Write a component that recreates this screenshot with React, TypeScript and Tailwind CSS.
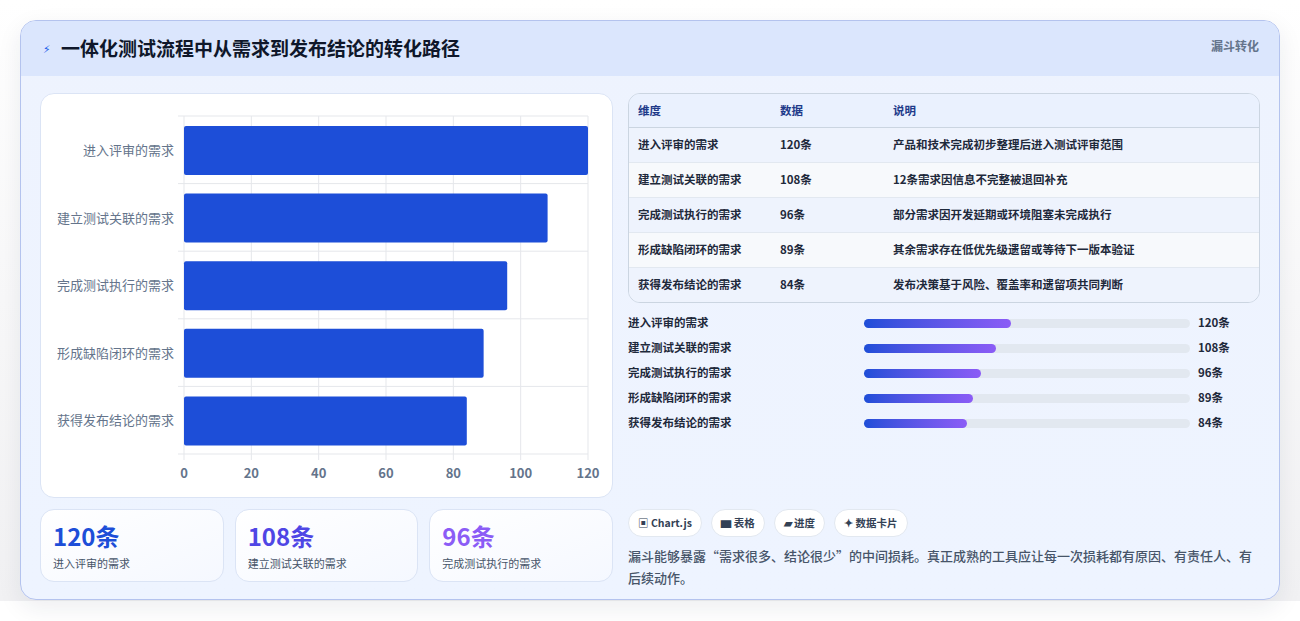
const rows = [
  { name: '进入评审的需求', value: 120, note: '产品和技术完成初步整理后进入测试评审范围' },
  { name: '建立测试关联的需求', value: 108, note: '12条需求因信息不完整被退回补充' },
  { name: '完成测试执行的需求', value: 96, note: '部分需求因开发延期或环境阻塞未完成执行' },
  { name: '形成缺陷闭环的需求', value: 89, note: '其余需求存在低优先级遗留或等待下一版本验证' },
  { name: '获得发布结论的需求', value: 84, note: '发布决策基于风险、覆盖率和遗留项共同判断' },
]

function BarChart() {
  // plot area inside the svg
  const x0 = 143
  const x1 = 547
  const y0 = 22
  const y1 = 360
  const step = (y1 - y0) / 5
  const sx = (v: number) => x0 + ((x1 - x0) * v) / 120
  return (
    <svg width="572" height="403" className="block">
      {[0, 20, 40, 60, 80, 100, 120].map((t) => (
        <g key={t}>
          <line x1={sx(t)} y1={y0} x2={sx(t)} y2={y1 + 6} stroke="#e5e7eb" />
          <text x={sx(t)} y={384} textAnchor="middle" fontSize="13" fontWeight="600" fill="#64748b">
            {t}
          </text>
        </g>
      ))}
      {[0, 1, 2, 3, 4, 5].map((i) => (
        <line key={i} x1={x0 - 6} y1={y0 + i * step} x2={x1} y2={y0 + i * step} stroke="#e5e7eb" />
      ))}
      {rows.map((r, i) => (
        <g key={r.name}>
          <rect x={x0} y={y0 + i * step + 10} width={sx(r.value) - x0} height={49} rx="2" fill="#1d4ed8" />
          <text x={x0 - 10} y={y0 + i * step + 39} textAnchor="end" fontSize="13" fill="#64748b">
            {r.name}
          </text>
        </g>
      ))}
    </svg>
  )
}

export default function App() {
  const font = { fontFamily: '"Noto Sans CJK SC", "Noto Sans", sans-serif' }
  return (
    <div className="w-[1300px] h-[621px] bg-white" style={font}>
      <div className="h-[601px] bg-gradient-to-b from-white to-[#f1f1f3] pt-[20px] px-[20px]">
        <div className="rounded-[16px] border border-[#b4c3ee] bg-gradient-to-b from-[#eef3fe] to-[#eef4ff] shadow-[0_8px_24px_rgba(30,41,59,0.08)] overflow-hidden h-[580px]">
          <div className="h-[55px] bg-[#dbe6fd] flex items-center justify-between pl-[22px] pr-[20px]">
            <div className="flex items-center gap-[10px]">
              <span className="text-[11px] text-[#2563eb]">⚡︎</span>
              <h1 className="text-[19px] font-bold text-[#0f172a]">一体化测试流程中从需求到发布结论的转化路径</h1>
            </div>
            <span className="text-[12px] font-bold text-[#64748b] self-start mt-[16px]">漏斗转化</span>
          </div>
          <div className="flex gap-[15px] px-[19px] pt-[17px]">
            <div className="w-[573px] flex flex-col gap-[11px]">
              <div className="bg-white rounded-[14px] border border-[#dbe4f5] overflow-hidden">
                <BarChart />
              </div>
              <div className="grid grid-cols-3 gap-[11px]">
                {[
                  ['120条', '进入评审的需求', 'text-[#1d4ed8]'],
                  ['108条', '建立测试关联的需求', 'text-[#4f46e5]'],
                  ['96条', '完成测试执行的需求', 'text-[#8b5cf6]'],
                ].map(([n, l, c]) => (
                  <div key={l} className="h-[73px] rounded-[14px] border border-[#dbe4f5] bg-gradient-to-br from-white to-[#f5f8ff] px-[12px] pt-[10px]">
                    <div className={`text-[24px] font-bold leading-[32px] ${c}`}>{n}</div>
                    <div className="text-[11px] text-[#475569] mt-[3px]">{l}</div>
                  </div>
                ))}
              </div>
            </div>
            <div className="w-[634px] flex flex-col">
              <div className="rounded-[12px] border border-[#cbd5e1] overflow-hidden">
                <table className="w-full text-[11.5px] font-semibold text-[#1e293b]">
                  <thead>
                    <tr className="bg-[#eaf1fe] text-[#1e3a8a] h-[33px] border-b border-[#cbd5e1]">
                      <th className="text-left pl-[9px] w-[151px] font-bold">维度</th>
                      <th className="text-left w-[113px] font-bold">数据</th>
                      <th className="text-left font-bold">说明</th>
                    </tr>
                  </thead>
                  <tbody>
                    {rows.map((r, i) => (
                      <tr key={r.name} className={`h-[35px] ${i < 4 ? 'border-b border-[#e2e8f0]' : ''} ${i % 2 === 0 ? 'bg-[#eef3fd]' : 'bg-[#f7f9fc]'}`}>
                        <td className="pl-[9px]">{r.name}</td>
                        <td>{r.value}条</td>
                        <td>{r.note}</td>
                      </tr>
                    ))}
                  </tbody>
                </table>
              </div>
              <div className="flex flex-col gap-[9px] mt-[12px]">
                {rows.map((r) => (
                  <div key={r.name} className="flex items-center h-[16px] text-[11.5px] font-semibold text-[#1e293b]">
                    <div className="w-[236px]">{r.name}</div>
                    <div className="w-[326px] h-[9px] rounded-full bg-[#e2e8f0]">
                      <div className="h-full rounded-full bg-gradient-to-r from-[#1d4ed8] to-[#8b5cf6]" style={{ width: `${(r.value / 120) * 45}%` }} />
                    </div>
                    <div className="ml-[8px] font-bold">{r.value}条</div>
                  </div>
                ))}
              </div>
              <div className="flex gap-[9px] mt-[78px]">
                {['▣ Chart.js', '▆ 表格', '▰ 进度', '✦ 数据卡片'].map((c) => (
                  <span key={c} className="h-[28px] px-[9px] rounded-full bg-white border border-[#e2e8f0] text-[10.5px] font-bold text-[#334155] flex items-center">
                    {c}
                  </span>
                ))}
              </div>
              <p className="mt-[8px] text-[13px] font-medium leading-[22px] text-[#475569]">
                漏斗能够暴露“需求很多、结论很少”的中间损耗。真正成熟的工具应让每一次损耗都有原因、有责任人、有后续动作。
              </p>
            </div>
          </div>
        </div>
      </div>
    </div>
  )
}
